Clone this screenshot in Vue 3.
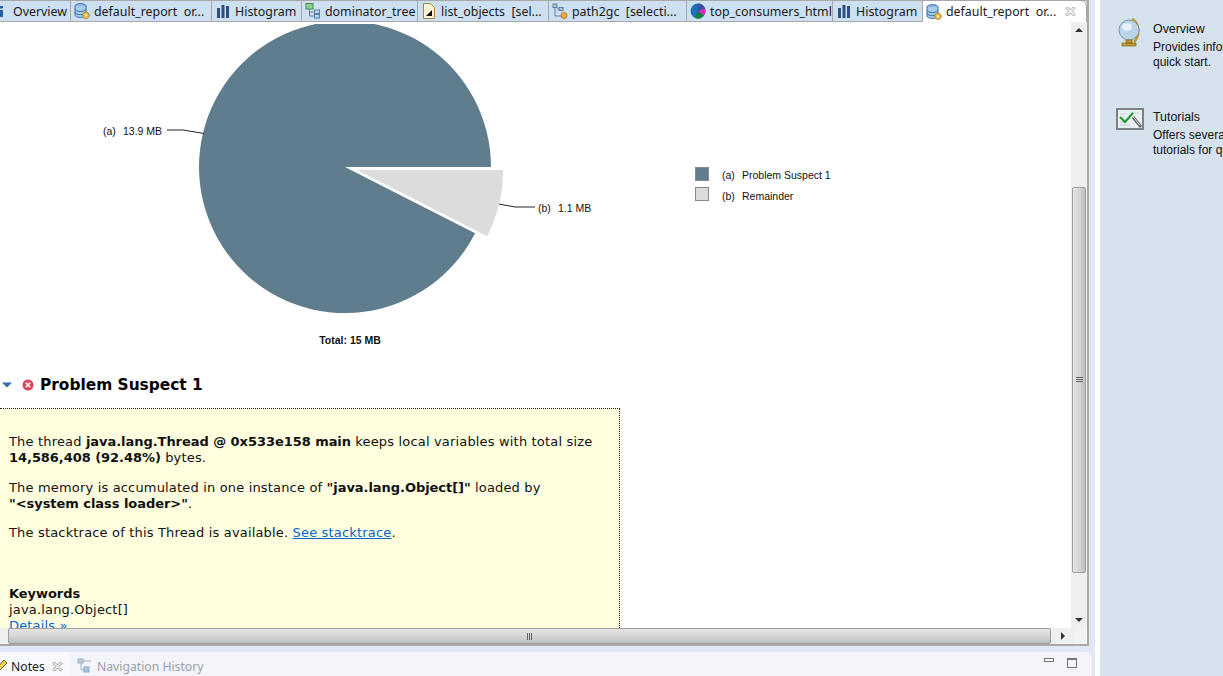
<template>
  <div class="workbench">
    <div class="main-col">
      <section class="editor">
        <div class="tab-bar">
          <div
            v-for="tab in tabs"
            :key="tab.id"
            class="tab"
            :class="[tab.kind, { active: tab.active }]"
            :style="tab.width ? { width: tab.width + 'px' } : null"
          >
            <svg v-if="tab.kind === 'info'" class="ico" viewBox="0 0 16 16">
              <rect x="0" y="3" width="3" height="2.5" fill="#2a5b9c" />
              <rect x="0" y="7" width="3" height="7" fill="#2a5b9c" />
            </svg>
            <svg v-else-if="tab.kind === 'report'" class="ico" viewBox="0 0 16 16">
              <ellipse cx="6.5" cy="3" rx="5.5" ry="2.4" fill="#8fb8e0" stroke="#3a6ea8" />
              <path d="M1 3v9c0 1.400 2.500 2.400 5.500 2.400S12 13.400 12 12V3" fill="#a9cbea" stroke="#3a6ea8" />
              <path d="M1 6.200c0 1.300 2.500 2.300 5.500 2.300S12 7.500 12 6.200M1 9.300c0 1.300 2.500 2.300 5.500 2.300S12 10.600 12 9.300" fill="none" stroke="#3a6ea8" />
              <circle cx="12" cy="12.300" r="3.200" fill="#f0b840" stroke="#a8701c" stroke-dasharray="1.500 0.700" />
              <circle cx="12" cy="12.300" r="1.100" fill="#fff" />
            </svg>
            <svg v-else-if="tab.kind === 'histogram'" class="ico" viewBox="0 0 16 16">
              <rect x="2" y="5" width="3" height="10" fill="#2d4f80" />
              <rect x="6.500" y="2" width="3" height="13" fill="#2d4f80" />
              <rect x="11" y="3" width="3" height="12" fill="#2d4f80" />
            </svg>
            <svg v-else-if="tab.kind === 'tree'" class="ico" viewBox="0 0 16 16">
              <rect x="1" y="0.500" width="7" height="5.500" fill="#8fd08f" stroke="#4c8a4c" />
              <path d="M4.500 6v7H9M4.500 9H9" fill="none" stroke="#6a7f95" />
              <rect x="9.500" y="7" width="5" height="3.500" fill="#bcd6ee" stroke="#4f7fae" />
              <rect x="9.500" y="11.500" width="5" height="3.500" fill="#bcd6ee" stroke="#4f7fae" />
            </svg>
            <svg v-else-if="tab.kind === 'doc'" class="ico" viewBox="0 0 16 16">
              <path d="M2.500 0.500h7l4 4v11h-11z" fill="#fbf3d8" stroke="#a5843f" />
              <path d="M5 13l6-6v6z" fill="#111" />
            </svg>
            <svg v-else-if="tab.kind === 'path'" class="ico" viewBox="0 0 16 16">
              <rect x="1" y="1" width="4" height="3.500" fill="#aac6e2" stroke="#5f7f9f" />
              <rect x="7" y="4.500" width="4" height="3" fill="#aac6e2" stroke="#5f7f9f" />
              <path d="M3 4.500V13h6M5 6h2" fill="none" stroke="#6a7f95" />
              <circle cx="12" cy="12.500" r="3" fill="#f0b040" stroke="#b87820" />
            </svg>
            <svg v-else-if="tab.kind === 'consumers'" class="ico" viewBox="0 0 16 16">
              <circle cx="8" cy="8" r="7.500" fill="#1d6fb8" />
              <path d="M8 8V0.500A7.500 7.500 0 0 1 15.200 6z" fill="#3f4f9f" />
              <path d="M8 8l7.200-2A7.500 7.500 0 0 1 14 12.500z" fill="#f020d0" />
              <path d="M8 8l6 4.500A7.500 7.500 0 0 1 5 15z" fill="#108040" />
            </svg>
            <span class="tab-label">{{ tab.label }}</span>
            <svg v-if="tab.active" class="close" viewBox="0 0 11 11">
              <path d="M1 2.500L2.500 1 5.500 4 8.500 1 10 2.500 7 5.500 10 8.500 8.500 10 5.500 7 2.500 10 1 8.500 4 5.500z" fill="#fff" stroke="#9a9a9a" />
            </svg>
          </div>
        </div>

        <div class="editor-body">
          <div class="content">
            <svg class="chart" width="900" height="330" viewBox="0 0 900 330">
              <path :d="bigSlice" fill="#607d8e" />
              <path :d="smallSlice" fill="#dcdcdc" />
              <path d="M167 106L183 106 204 109.500" fill="none" stroke="#222" />
              <path d="M499 180L515 183 535 183" fill="none" stroke="#222" />
              <text x="103" y="111" class="c-label">(a)</text>
              <text x="123" y="111" class="c-label">13.9 MB</text>
              <text x="538" y="188" class="c-label">(b)</text>
              <text x="558" y="188" class="c-label">1.1 MB</text>
              <text x="350" y="320" class="c-total" text-anchor="middle">Total: 15 MB</text>
              <rect x="695.500" y="143.500" width="13" height="13" fill="#607d8e" stroke="#8a8a8a" />
              <rect x="695.500" y="163.500" width="13" height="13" fill="#dcdcdc" stroke="#8a8a8a" />
              <text x="722" y="155" class="c-label">(a)</text>
              <text x="742" y="155" class="c-label">Problem Suspect 1</text>
              <text x="722" y="176" class="c-label">(b)</text>
              <text x="742" y="176" class="c-label">Remainder</text>
            </svg>

            <div class="suspect-head">
              <svg class="twisty" viewBox="0 0 10 6"><path d="M0 0.500h10L5 5.500z" fill="#2f6da8" /></svg>
              <svg class="err" viewBox="0 0 12 12">
                <circle cx="6" cy="6" r="5.500" fill="#d9475a" />
                <path d="M3.800 3.800l4.400 4.400M8.200 3.800l-4.400 4.400" stroke="#fff" stroke-width="1.600" />
              </svg>
              <h2>Problem Suspect 1</h2>
            </div>

            <div class="note-box">
              <p>The thread <b>java.lang.Thread @ 0x533e158 main</b> keeps local variables with total size <b>14,586,408 (92.48%)</b> bytes.</p>
              <p class="tight">The memory is accumulated in one instance of <b>"java.lang.Object[]"</b> loaded by <b class="nobreak">"&lt;system class loader&gt;"</b>.</p>
              <p>The stacktrace of this Thread is available. <a href="#">See stacktrace</a>.</p>
              <div class="keywords">
                <b>Keywords</b><br />
                java.lang.Object[]<br />
                <a class="plain" href="#">Details »</a>
              </div>
            </div>
          </div>

          <div class="vscroll">
            <div class="arrow up"></div>
            <div class="v-track"><div class="v-thumb"><span class="v-grip"></span></div></div>
            <div class="arrow down"></div>
          </div>
        </div>

        <div class="hscroll">
          <div class="h-thumb"><span class="h-grip"></span></div>
          <div class="arrow right"></div>
          <div class="corner"></div>
        </div>
      </section>

      <footer class="bottom-panel">
        <div class="notes-tab">
          <svg class="pencil" viewBox="0 0 12 14">
            <path d="M0 13l1-4 7-8 3 3-7 7z" fill="#f2d34f" stroke="#6a5a20" />
          </svg>
          <span>Notes</span>
          <svg class="close" viewBox="0 0 11 11">
            <path d="M1 2.500L2.500 1 5.500 4 8.500 1 10 2.500 7 5.500 10 8.500 8.500 10 5.500 7 2.500 10 1 8.500 4 5.500z" fill="#fff" stroke="#8a8a8a" />
          </svg>
        </div>
        <div class="nav-tab">
          <svg class="ico" viewBox="0 0 16 16">
            <rect x="1" y="1" width="5" height="4" fill="#b9cde2" stroke="#9ab0c6" />
            <path d="M6 3h8M4 5v7h3" fill="none" stroke="#a5b2c0" />
            <rect x="7" y="9" width="5" height="5" fill="#a8c4e0" stroke="#8ea8c4" />
          </svg>
          <span>Navigation History</span>
        </div>
        <div class="view-btns">
          <span class="min-btn"></span>
          <span class="max-btn"></span>
        </div>
      </footer>
    </div>

    <aside class="welcome">
      <div class="w-item">
        <svg class="w-ico" viewBox="0 0 24 30">
          <path d="M14 1c7 3 9 16 2 23" fill="none" stroke="#c29a2c" stroke-width="2.500" />
          <circle cx="11" cy="12" r="10" fill="#bcd4e8" stroke="#7f97a8" />
          <ellipse cx="9" cy="9" rx="5" ry="4" fill="#e6f0f8" />
          <path d="M8 22h6v3H8zM4 25h14v3H4z" fill="#c29a2c" stroke="#8a6a1c" stroke-width="0.800" />
        </svg>
        <div>
          <div class="w-title">Overview</div>
          <div class="w-desc">Provides information for a<br />quick start.</div>
        </div>
      </div>
      <div class="w-item">
        <svg class="w-ico wide" viewBox="0 0 28 22">
          <rect x="1" y="1" width="26" height="20" fill="#e6eff1" stroke="#808080" stroke-width="2" />
          <path d="M4 6h6M15 5h8M4 17h10M4 14h6" stroke="#c4d0d4" />
          <path d="M4 9l5 5 8-9" fill="none" stroke="#1d9a2a" stroke-width="2" />
          <path d="M17 9l8 10" stroke="#666" stroke-width="3" />
          <path d="M17 8.500l7 9" stroke="#e8e8e8" stroke-width="1" />
        </svg>
        <div>
          <div class="w-title">Tutorials</div>
          <div class="w-desc">Offers several step-by-step<br />tutorials for quick learning.</div>
        </div>
      </div>
    </aside>
  </div>
</template>

<script setup>
const tabs = [
  { id: 1, kind: 'info', label: 'Overview', width: 71 },
  { id: 2, kind: 'report', label: 'default_report  or...', width: 141 },
  { id: 3, kind: 'histogram', label: 'Histogram', width: 90 },
  { id: 4, kind: 'tree', label: 'dominator_tree', width: 116 },
  { id: 5, kind: 'doc', label: 'list_objects  [sel...', width: 131 },
  { id: 6, kind: 'path', label: 'path2gc  [selecti...', width: 138 },
  { id: 7, kind: 'consumers', label: 'top_consumers_html', width: 146 },
  { id: 8, kind: 'histogram', label: 'Histogram', width: 90 },
  { id: 9, kind: 'report', label: 'default_report  or...', active: true }
]

// coordinates are local to the chart svg, which starts at y = 24 on the page
const cx = 345
const cy = 143
const r = 146
const end = (27 * Math.PI) / 180
const x1 = (cx + r * Math.cos(end)).toFixed(1)
const y1 = (cy + r * Math.sin(end)).toFixed(1)
const bigSlice = `M${cx} ${cy}L${cx + r} ${cy}A${r} ${r} 0 1 0 ${x1} ${y1}Z`

const sx = 357
const sy = 146
const x2 = (sx + r * Math.cos(end)).toFixed(1)
const y2 = (sy + r * Math.sin(end)).toFixed(1)
const smallSlice = `M${sx} ${sy}L${sx + r} ${sy}A${r} ${r} 0 0 1 ${x2} ${y2}Z`
</script>

<style>
html, body {
  margin: 0;
  overflow: hidden;
}
</style>

<style scoped>
.workbench {
  width: 1223px;
  height: 676px;
  display: flex;
  overflow: hidden;
  background: #fff;
  font-family: "Liberation Sans", Arial, sans-serif;
}

.main-col {
  width: 1095px;
  background: #e1e7f6;
  display: flex;
  flex-direction: column;
  border-right: 5px solid #fff;
  flex: none;
}

/* editor area */
.editor {
  width: 1089px;
  height: 646px;
  background: #fff;
  border-right: 2px solid #a9a9a9;
  border-bottom: 2px solid #a9a9a9;
  box-sizing: border-box;
  display: flex;
  flex-direction: column;
  flex: none;
}

.tab-bar {
  height: 22px;
  display: flex;
  background: #cde0f1;
  border-top: 1px solid #a8a8a8;
  border-bottom: 1px solid #a8a8a8;
  box-sizing: border-box;
  flex: none;
  font-family: "Noto Sans", sans-serif;
  font-size: 12.4px;
  color: #1a1a1a;
}

.tab {
  height: 20px;
  display: flex;
  align-items: center;
  gap: 4px;
  padding: 0 0 0 3px;
  border-right: 1px solid #a8a8a8;
  box-sizing: border-box;
  white-space: pre;
  flex: none;
}

.tab.info {
  gap: 6px;
  padding-left: 0;
}

.tab.info .ico {
  margin-right: -9px;
}

.tab.active {
  flex: 1;
  height: 21px;
  background: #fff;
  border-radius: 0 6px 0 0;
  border-left: 1px solid #a8a8a8;
  margin-left: -1px;
}

.ico {
  width: 16px;
  height: 16px;
  flex: none;
}

.close {
  width: 11px;
  height: 11px;
  flex: none;
  margin-left: 5px;
}

.editor-body {
  flex: 1;
  min-height: 0;
  display: flex;
}

.content {
  flex: 1;
  min-width: 0;
  overflow: hidden;
  font-family: "DejaVu Sans", Verdana, sans-serif;
  font-size: 13px;
  line-height: 16px;
  letter-spacing: 0.17px;
  color: #111;
}

.content b {
  letter-spacing: -0.05px;
}

.nobreak {
  white-space: nowrap;
}

.chart {
  display: block;
  margin-top: 2px;
  font-family: "Liberation Sans", Arial, sans-serif;
  letter-spacing: 0;
}

.c-label {
  font-size: 10.5px;
  fill: #111;
}

.c-total {
  font-size: 10.5px;
  font-weight: 700;
  fill: #111;
}

.suspect-head {
  display: flex;
  align-items: center;
  height: 26px;
  margin-top: 17px;
  padding-left: 2px;
}

.twisty {
  width: 10px;
  height: 6px;
  margin-top: 2px;
}

.err {
  width: 12px;
  height: 12px;
  margin-left: 10px;
  margin-top: 1px;
}

.suspect-head h2 {
  margin: 0 0 0 6px;
  padding-top: 2px;
  font-size: 15.4px;
  line-height: 26px;
  font-weight: 700;
  letter-spacing: 0;
  color: #000;
}

.note-box {
  width: 620px;
  box-sizing: border-box;
  margin-top: 11px;
  height: 400px;
  padding: 25px 24px 0 9px;
  background: #ffffe0;
  border-top: 1px dotted #222;
  border-right: 1px dotted #222;
}

.note-box p {
  margin: 0 0 14px;
}

.note-box p.tight {
  margin-bottom: 13px;
}

.note-box a {
  color: #0066cc;
}

.note-box a.plain {
  text-decoration: none;
}

.keywords {
  margin-top: 45px;
}

/* scrollbars */
.vscroll {
  width: 16px;
  background: #efefef;
  display: flex;
  flex-direction: column;
  flex: none;
}

.v-track {
  flex: 1;
  padding-top: 149px;
  padding-bottom: 39px;
  display: flex;
  box-sizing: border-box;
}

.v-thumb {
  flex: 1;
  margin: 0 1px;
  box-sizing: border-box;
  border: 1px solid #a0a0a0;
  border-radius: 2px;
  background: linear-gradient(to right, #e4e4e4, #d2d2d2 60%, #bdbdbd);
  display: flex;
  align-items: center;
  justify-content: center;
}

.v-grip {
  width: 7px;
  height: 6px;
  background: repeating-linear-gradient(to bottom, #666 0 1px, transparent 1px 2px);
}

.arrow {
  flex: none;
  display: flex;
  align-items: center;
  justify-content: center;
}

.arrow::before {
  content: "";
  border: 4px solid transparent;
}

.arrow.up,
.arrow.down {
  height: 16px;
}

.arrow.up::before {
  border-bottom-color: #333;
  border-top-width: 0;
}

.arrow.down::before {
  border-top-color: #333;
  border-bottom-width: 0;
}

.hscroll {
  height: 16px;
  display: flex;
  background: #efefef;
  flex: none;
  padding-left: 8px;
}

.h-thumb {
  width: 1043px;
  box-sizing: border-box;
  border: 1px solid #a0a0a0;
  border-radius: 2px;
  background: linear-gradient(to bottom, #e4e4e4, #d2d2d2 60%, #bdbdbd);
  display: flex;
  align-items: center;
  justify-content: center;
}

.h-grip {
  width: 6px;
  height: 7px;
  background: repeating-linear-gradient(to right, #666 0 1px, transparent 1px 2px);
}

.arrow.right {
  width: 23px;
}

.arrow.right::before {
  border-left-color: #333;
  border-right-width: 0;
}

.corner {
  flex: 1;
  background: #f2f2f2;
}

/* bottom views */
.bottom-panel {
  margin-top: 6px;
  flex: 1;
  width: 1092px;
  box-sizing: border-box;
  background: #f3f5fb;
  border-radius: 0 6px 0 0;
  display: flex;
  align-items: center;
  font-family: "Noto Sans", sans-serif;
  font-size: 12.2px;
  color: #1a1a1a;
  overflow: hidden;
}

.notes-tab {
  width: 71px;
  height: 100%;
  box-sizing: border-box;
  display: flex;
  align-items: center;
  padding-top: 4px;
  background: #f8f9fd;
  border-radius: 0 8px 0 0;
  flex: none;
}

.pencil {
  width: 12px;
  height: 14px;
  margin-left: -4px;
  margin-right: 3px;
  flex: none;
}

.notes-tab .close {
  margin-left: 7px;
}

.nav-tab {
  display: flex;
  align-items: center;
  gap: 4px;
  margin-left: 6px;
  padding-top: 4px;
  color: #9aa0a8;
}

.view-btns {
  margin-left: auto;
  margin-right: 15px;
  display: flex;
  align-items: flex-start;
  gap: 13px;
  height: 12px;
}

.min-btn {
  width: 10px;
  height: 4px;
  border: 1px solid #777;
  box-sizing: border-box;
}

.max-btn {
  width: 10px;
  height: 10px;
  border: 1px solid #777;
  border-top-width: 2px;
  box-sizing: border-box;
}

/* welcome sidebar */
.welcome {
  flex: 1;
  min-width: 0;
  background: #d6e3ef;
  padding: 18px 0 0 16px;
  font-size: 12px;
  line-height: 15px;
  color: #111;
  overflow: hidden;
}

.w-item {
  display: flex;
  gap: 9px;
  height: 88px;
  white-space: nowrap;
}

.w-ico {
  width: 24px;
  height: 30px;
  flex: none;
  margin-left: 2px;
  margin-right: 2px;
}

.w-ico.wide {
  width: 28px;
  height: 22px;
  margin: 2px 0 0;
}

.w-title {
  margin-top: 4px;
  margin-bottom: 3px;
  font-size: 12.4px;
}
</style>
